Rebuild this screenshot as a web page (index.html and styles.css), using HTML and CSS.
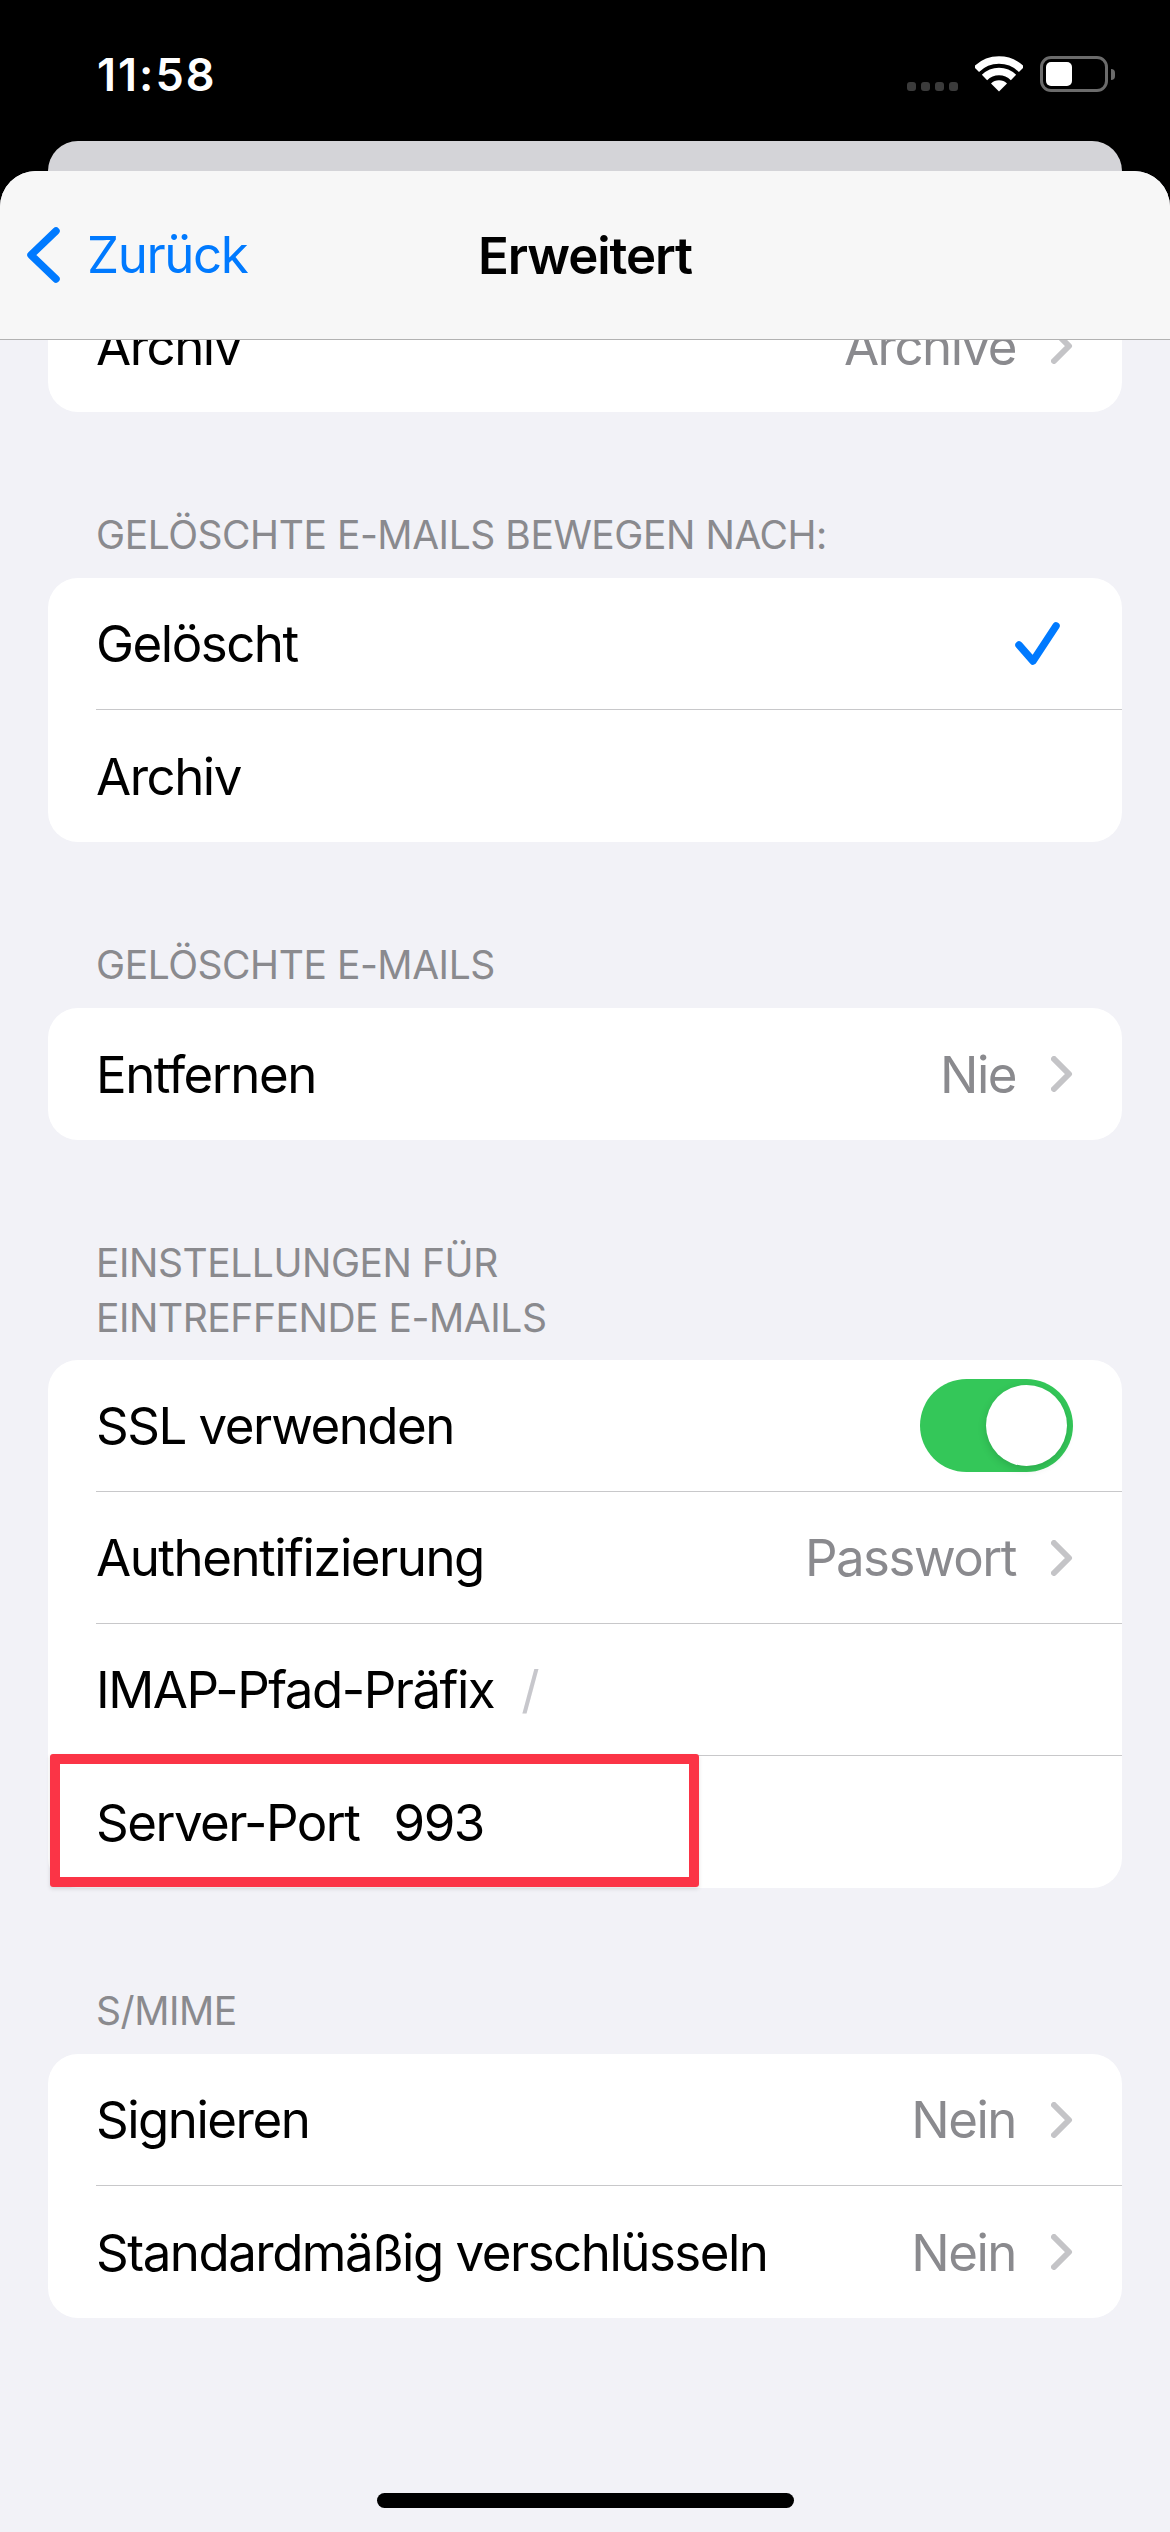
FILE: index.html
```html
<!DOCTYPE html>
<html lang="de">
<head>
    <meta charset="UTF-8">
    <meta name="viewport" content="width=device-width, initial-scale=1.0">
    <title>Erweitert</title>
    <link rel="stylesheet" href="styles.css">
</head>
<body>
    <div class="status-bar">
        <span class="time">11:58</span>
        <div class="status-icons">
            <div class="signal"><i></i><i></i><i></i><i></i></div>
            <svg class="wifi" width="48" height="36" viewBox="0 0 48 36">
                <path d="M1.4 13.4A32 32 0 0 1 46.6 13.4" fill="none" stroke="#fff" stroke-width="7.5"/>
                <path d="M9.5 21.5A20.5 20.5 0 0 1 38.5 21.5" fill="none" stroke="#fff" stroke-width="7.5"/>
                <path d="M24 35.5L16 27.5A11.3 11.3 0 0 1 32 27.5Z" fill="#fff"/>
            </svg>
            <div class="battery"><div class="battery-level"></div></div>
            <div class="battery-nub"></div>
        </div>
    </div>

    <div class="back-sheet"></div>

    <div class="sheet">
        <div class="nav-bar">
            <a class="nav-back" href="#">
                <svg width="33" height="56" viewBox="0 0 33 56">
                    <path d="M29 4L4 28L29 52" fill="none" stroke="#007aff" stroke-width="7.5" stroke-linecap="round" stroke-linejoin="round"/>
                </svg>
                <span>Zurück</span>
            </a>
            <span class="nav-title">Erweitert</span>
        </div>

        <div class="content">
            <div class="card">
                <div class="row">
                    <span class="label">Archiv</span>
                    <span class="value">Archive</span>
                    <svg class="chevron" width="22" height="36" viewBox="0 0 22 36"><path d="M3 3L18 18L3 33"/></svg>
                </div>
            </div>

            <div class="section-title">Gelöschte E-Mails bewegen nach:</div>
            <div class="card">
                <div class="row">
                    <span class="label">Gelöscht</span>
                    <svg class="check" width="46" height="45" viewBox="0 0 46 45">
                        <path d="M4 24L18 40L41 5" fill="none" stroke="#007aff" stroke-width="7.5" stroke-linecap="round" stroke-linejoin="round"/>
                    </svg>
                </div>
                <div class="row">
                    <span class="label">Archiv</span>
                </div>
            </div>

            <div class="section-title">Gelöschte E-Mails</div>
            <div class="card">
                <div class="row">
                    <span class="label">Entfernen</span>
                    <span class="value">Nie</span>
                    <svg class="chevron" width="22" height="36" viewBox="0 0 22 36"><path d="M3 3L18 18L3 33"/></svg>
                </div>
            </div>

            <div class="section-title section-title-long">Einstellungen für<br>eintreffende E-Mails</div>
            <div class="card">
                <div class="row">
                    <span class="label">SSL verwenden</span>
                    <div class="switch"><div class="knob"></div></div>
                </div>
                <div class="row">
                    <span class="label">Authentifizierung</span>
                    <span class="value">Passwort</span>
                    <svg class="chevron" width="22" height="36" viewBox="0 0 22 36"><path d="M3 3L18 18L3 33"/></svg>
                </div>
                <div class="row">
                    <span class="label">IMAP-Pfad-Präfix</span>
                    <span class="placeholder">/</span>
                </div>
                <div class="row row-marked">
                    <span class="label">Server-Port</span>
                    <span class="entry">993</span>
                    <div class="highlight"></div>
                </div>
            </div>

            <div class="section-title">S/MIME</div>
            <div class="card">
                <div class="row">
                    <span class="label">Signieren</span>
                    <span class="value">Nein</span>
                    <svg class="chevron" width="22" height="36" viewBox="0 0 22 36"><path d="M3 3L18 18L3 33"/></svg>
                </div>
                <div class="row">
                    <span class="label">Standardmäßig verschlüsseln</span>
                    <span class="value">Nein</span>
                    <svg class="chevron" width="22" height="36" viewBox="0 0 22 36"><path d="M3 3L18 18L3 33"/></svg>
                </div>
            </div>
        </div>

        <div class="home-indicator"></div>
    </div>
</body>
</html>
```

FILE: styles.css
```css
html, body {
    margin: 0;
    padding: 0;
}
body {
    width: 1170px;
    height: 2532px;
    overflow: hidden;
    background: #000;
    font-family: 'Inter', 'Liberation Sans', sans-serif;
    display: flex;
    flex-direction: column;
}
.status-bar {
    height: 141px;
    flex: none;
    padding: 0 55px 0 97px;
    box-sizing: border-box;
    display: flex;
    justify-content: space-between;
    align-items: flex-start;
}
.time {
    margin-top: 47px;
    font-size: 45px;
    line-height: 55px;
    font-weight: 600;
    letter-spacing: 2px;
    color: #fff;
}
.status-icons {
    margin-top: 56px;
    display: flex;
    align-items: flex-start;
}
.signal {
    margin: 26px 17px 0 0;
    display: flex;
    gap: 5px;
}
.signal i {
    width: 9px;
    height: 9px;
    border-radius: 3px;
    background: #3b3b3b;
}
.wifi {
    margin-right: 17px;
}
.battery {
    width: 68px;
    height: 36px;
    box-sizing: border-box;
    border: 3px solid #6b6b6b;
    border-radius: 11px;
    padding: 3px;
}
.battery-level {
    width: 26px;
    height: 24px;
    background: #fff;
    border-radius: 5px;
}
.battery-nub {
    width: 4px;
    height: 11px;
    margin: 13px 0 0 3px;
    background: #6b6b6b;
    border-radius: 0 5px 5px 0;
}
.back-sheet {
    height: 30px;
    flex: none;
    margin: 0 48px;
    background: #d4d4d8;
    border-radius: 30px 30px 0 0;
}
.sheet {
    position: relative;
    flex: 1;
    overflow: hidden;
    background: #f2f2f7;
    border-radius: 36px 36px 0 0;
}
.nav-bar {
    position: absolute;
    top: 0;
    left: 0;
    right: 0;
    z-index: 2;
    height: 168px;
    background: #f7f7f7;
    border-bottom: 1px solid #b2b2b2;
    display: flex;
    justify-content: center;
    align-items: center;
}
.nav-back {
    position: absolute;
    left: 27px;
    top: 56px;
    display: flex;
    align-items: center;
    gap: 27px;
    color: #007aff;
    text-decoration: none;
    font-size: 51px;
    line-height: 56px;
    letter-spacing: -1.4px;
}
.nav-title {
    font-size: 51px;
    font-weight: 600;
    letter-spacing: -1.1px;
    color: #000;
}
.content {
    padding-top: 109px;
}
.card {
    margin: 0 48px;
    background: #fff;
    border-radius: 30px;
    padding-left: 48px;
}
.row {
    position: relative;
    height: 132px;
    box-sizing: border-box;
    padding-right: 49px;
    border-bottom: 1px solid #c8c8ca;
    display: flex;
    align-items: center;
    font-size: 51px;
    letter-spacing: -1.5px;
    color: #000;
}
.row:last-child {
    border-bottom: none;
}
.label {
    white-space: nowrap;
}
.value {
    margin-left: auto;
    color: #8a8a8e;
}
.chevron {
    margin-left: 35px;
}
.chevron path {
    fill: none;
    stroke: #c4c4c7;
    stroke-width: 6;
    stroke-linecap: round;
    stroke-linejoin: round;
}
.check {
    margin-left: auto;
    margin-right: 12px;
}
.placeholder {
    margin-left: 27px;
    color: #c7c7cc;
}
.entry {
    margin-left: 34px;
}
.switch {
    margin-left: auto;
    width: 153px;
    height: 93px;
    box-sizing: border-box;
    padding: 6px;
    background: #34c759;
    border-radius: 47px;
    display: flex;
    justify-content: flex-end;
}
.knob {
    width: 81px;
    height: 81px;
    background: #fff;
    border-radius: 50%;
    box-shadow: 0 3px 8px rgba(0, 0, 0, 0.15);
}
.section-title {
    padding: 95px 49px 16px 96px;
    font-size: 39px;
    line-height: 55px;
    text-transform: uppercase;
    letter-spacing: -0.45px;
    color: #8a8a8e;
}
.section-title-long {
    padding-bottom: 15px;
}
.highlight {
    position: absolute;
    left: -46px;
    top: -2px;
    width: 649px;
    height: 133px;
    box-sizing: border-box;
    border: 10px solid #fb3446;
    border-radius: 3px;
    box-shadow: 0 2px 4px rgba(0, 0, 0, 0.12);
}
.home-indicator {
    position: absolute;
    left: 377px;
    bottom: 24px;
    width: 417px;
    height: 15px;
    background: #000;
    border-radius: 8px;
}
```
